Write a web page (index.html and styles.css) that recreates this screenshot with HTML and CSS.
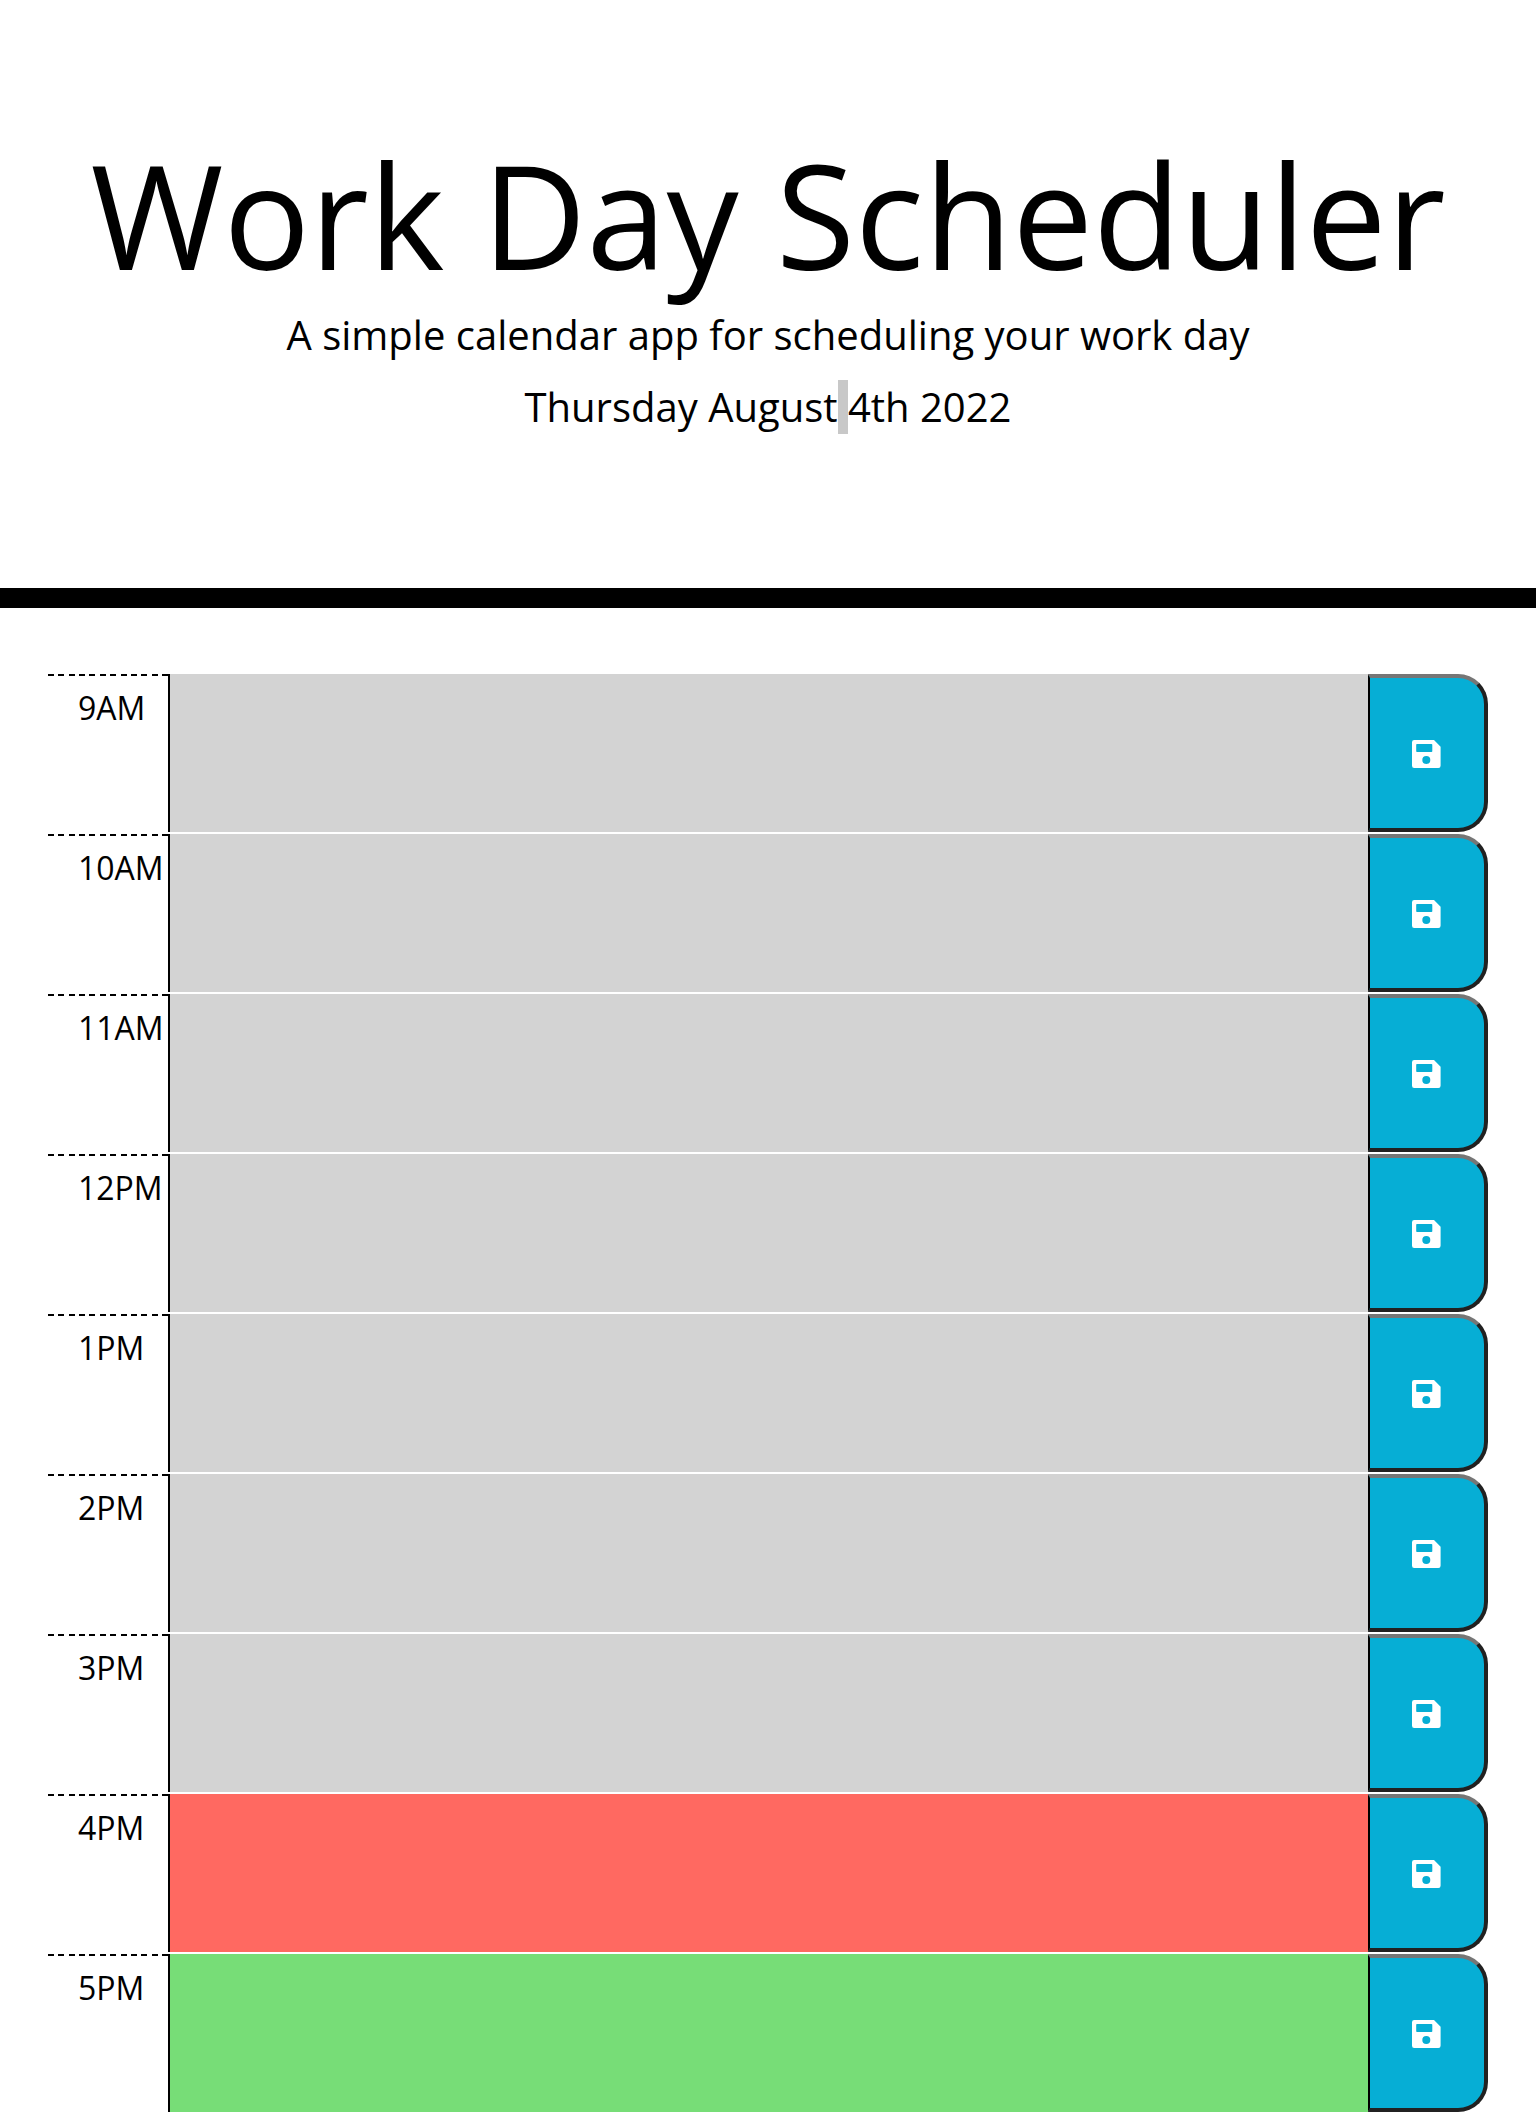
FILE: index.html
```html
<!DOCTYPE html>
<html lang="en">
<head>
<meta charset="UTF-8">
<title>Work Day Scheduler</title>
<link rel="stylesheet" href="styles.css">
</head>
<body>
<svg class="sprite" aria-hidden="true">
  <symbol id="save" viewBox="0 0 29 28">
    <path fill="#fff" fill-rule="evenodd" d="M2.2 0H22l6.600 6.800v19a2.200 2.200 0 0 1-2.200 2.200H2.200A2.200 2.200 0 0 1 0 25.800V2.200A2.200 2.200 0 0 1 2.200 0ZM5 4Q4.200 4 4.200 4.800V11.200Q4.200 12 5 12H19.500Q20.300 12 20.300 11.200V4.800Q20.300 4 19.500 4ZM14.300 16a4 4 0 1 0 0 8a4 4 0 0 0 0-8Z"/>
  </symbol>
</svg>
<header class="jumbotron">
  <h1 class="title">Work Day Scheduler</h1>
  <p class="lead">A simple calendar app for scheduling your work day</p>
  <p class="lead">Thursday August<span class="selected"> </span>4th 2022</p>
</header>
<main class="container">
  <div class="time-block"><div class="hour">9AM</div><div class="description past"></div><button class="save-btn" aria-label="Save"><svg><use href="#save"/></svg></button></div>
  <div class="time-block"><div class="hour">10AM</div><div class="description past"></div><button class="save-btn" aria-label="Save"><svg><use href="#save"/></svg></button></div>
  <div class="time-block"><div class="hour">11AM</div><div class="description past"></div><button class="save-btn" aria-label="Save"><svg><use href="#save"/></svg></button></div>
  <div class="time-block"><div class="hour">12PM</div><div class="description past"></div><button class="save-btn" aria-label="Save"><svg><use href="#save"/></svg></button></div>
  <div class="time-block"><div class="hour">1PM</div><div class="description past"></div><button class="save-btn" aria-label="Save"><svg><use href="#save"/></svg></button></div>
  <div class="time-block"><div class="hour">2PM</div><div class="description past"></div><button class="save-btn" aria-label="Save"><svg><use href="#save"/></svg></button></div>
  <div class="time-block"><div class="hour">3PM</div><div class="description past"></div><button class="save-btn" aria-label="Save"><svg><use href="#save"/></svg></button></div>
  <div class="time-block"><div class="hour">4PM</div><div class="description present"></div><button class="save-btn" aria-label="Save"><svg><use href="#save"/></svg></button></div>
  <div class="time-block"><div class="hour">5PM</div><div class="description future"></div><button class="save-btn" aria-label="Save"><svg><use href="#save"/></svg></button></div>
</main>
</body>
</html>
```
FILE: styles.css
```css
* { box-sizing: border-box; }

body {
  margin: 0;
  background: #fff;
  color: #000;
  font-family: "Open Sans", sans-serif;
  font-size: 32px;
  line-height: 1.5;
  overflow: hidden;
}

.sprite { display: none; }

.jumbotron {
  height: 608px;
  padding-top: 128px;
  border-bottom: 20px solid #000;
  text-align: center;
}

.title {
  margin: 0;
  font-size: 144px;
  font-weight: 400;
  line-height: 173px;
  white-space: nowrap;
}

.lead {
  margin: 0 0 12px;
  font-size: 40px;
  font-weight: 400;
  line-height: 60px;
}

.title + .lead { margin-top: 4px; }

.selected { background: linear-gradient(transparent 1px, #c8c8c8 1px); }

.container {
  display: flex;
  flex-direction: column;
  gap: 2px;
  padding: 66px 48px 0;
}

.time-block {
  display: grid;
  grid-template-columns: 122px 1fr 120px;
  height: 158px;
}

.hour {
  padding: 10px 0 0 30px;
  border-right: 2px solid #000;
  /* dashed rule along the top edge */
  background: repeating-linear-gradient(to right, #000 0 6px, transparent 6px 10.36px) 0 0 / 120px 2px no-repeat;
}

.past { background: #d3d3d3; }
.present { background: #ff6961; }
.future { background: #77dd77; }

.save-btn {
  display: flex;
  align-items: center;
  justify-content: center;
  padding: 2px 2px 0 0;
  border: 4px solid #212121;
  border-top-color: #767676;
  border-left: 2px solid #000;
  border-radius: 0 30px 30px 0;
  background: #06aed5;
}

.save-btn svg {
  display: block;
  width: 29px;
  height: 28px;
}
```
